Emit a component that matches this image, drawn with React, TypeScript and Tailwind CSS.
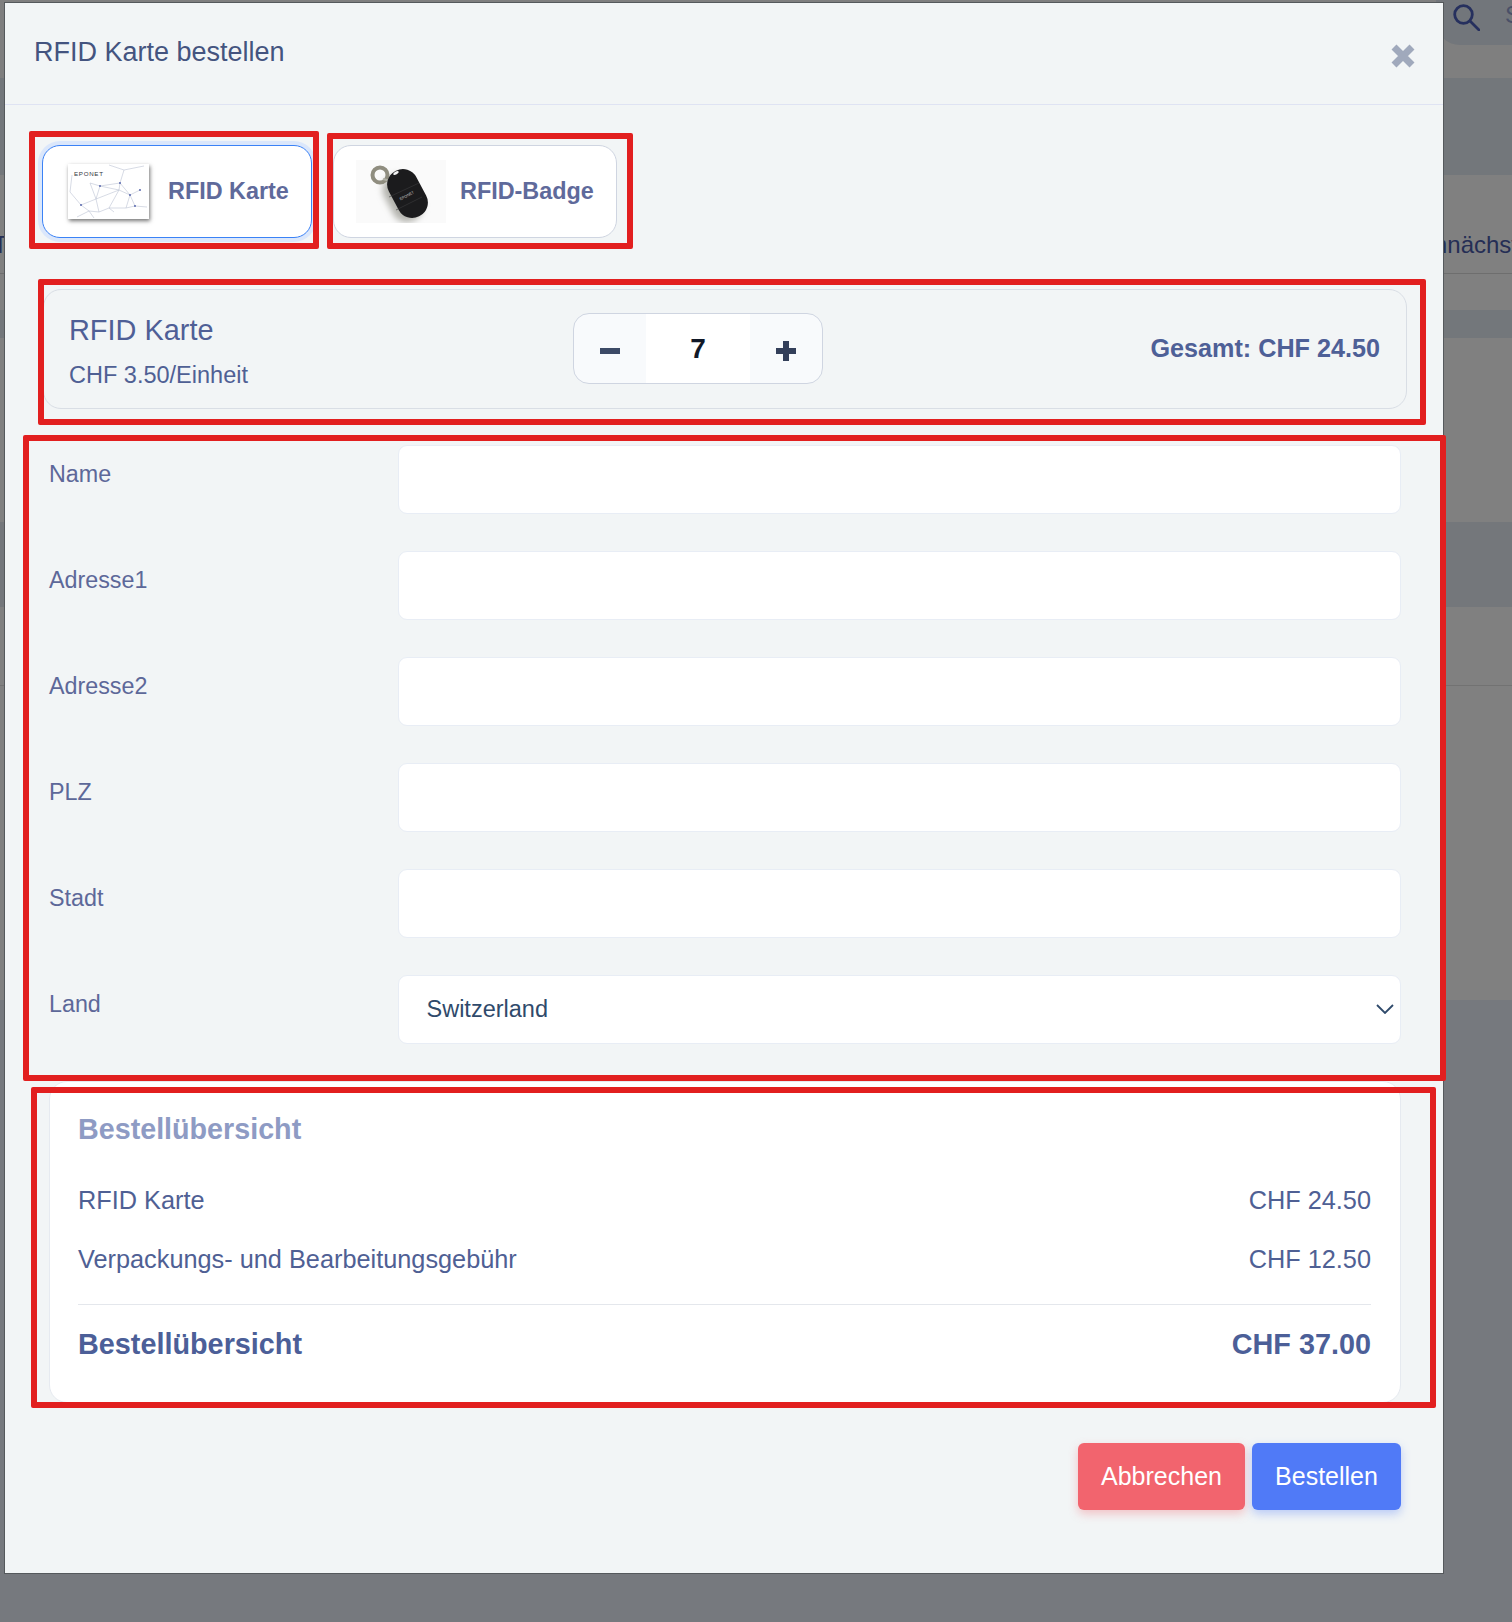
const fields = ["Name", "Adresse1", "Adresse2", "PLZ", "Stadt"];

// node positions of the network printed on the card
const nodes: Record<string, [number, number]> = {
  a: [56, 6], b: [76, 2], c: [41, 1], d: [52, 19], e: [72, 26], f: [62, 31], g: [51, 26], h: [32, 22],
  i: [22, 19], j: [28, 35], k: [13, 41], l: [2, 28], m: [4, 11], n: [41, 44], o: [46, 48], p: [58, 44],
  q: [67, 42], r: [79, 43], s: [31, 48], t: [21, 47], u: [9, 53], v: [26, 54],
};
const links = ["ab", "ac", "ad", "dg", "gf", "fe", "fq", "fp", "gn", "gj", "jh", "hi", "ij", "jk", "kl", "lm", "js", "sn", "np", "pq", "qr", "kt", "ts", "tu", "tv", "hg", "dh", "no", "fd"];

function CardPicture() {
  return (
    <div className="h-[55px] w-[81px] shrink-0 bg-white shadow-[1px_2px_4px_rgba(0,0,0,0.55)]">
      <svg viewBox="0 0 81 55" className="h-full w-full">
        {links.map((l) => (
          <line key={l} x1={nodes[l[0]][0]} y1={nodes[l[0]][1]} x2={nodes[l[1]][0]} y2={nodes[l[1]][1]} stroke="#bcc3d4" strokeWidth="0.6" />
        ))}
        {["d", "e", "f", "h", "k", "q"].map((k) => (
          <circle key={k} cx={nodes[k][0]} cy={nodes[k][1]} r="0.9" fill="#4a5aa8" />
        ))}
        <text x="6" y="12" fontSize="6.2" letterSpacing="0.7" fill="#33363d" fontFamily="Liberation Sans, sans-serif">EPONET</text>
      </svg>
    </div>
  );
}

function BadgePicture() {
  return (
    <div className="h-[63px] w-[90px] shrink-0 bg-[#fafafa]">
      <svg viewBox="0 0 90 63" className="h-full w-full">
        <defs>
          <filter id="fob-blur" x="-50%" y="-50%" width="200%" height="200%">
            <feGaussianBlur stdDeviation="3" />
          </filter>
        </defs>
        <rect x="31" y="13" width="31" height="50" rx="15" transform="rotate(-28 47 38)" fill="#b4b4ae" filter="url(#fob-blur)" />
        <circle cx="24" cy="15" r="7.5" fill="none" stroke="#8f8d7f" strokeWidth="4" />
        <path d="M27 19l11 3" stroke="#b0b0a6" strokeWidth="2" />
        <rect x="36" y="8" width="31" height="51" rx="15" transform="rotate(-28 51.5 33.5)" fill="#1b1b1d" />
        <path d="M33 37l30-14" stroke="#3a3a3c" strokeWidth="0.6" />
        <path d="M40 50l26-13" stroke="#3a3a3c" strokeWidth="0.6" />
        <text x="51" y="37" fontSize="3.8" textAnchor="middle" fill="#c9c9c9" transform="rotate(-28 51 36)" fontFamily="Liberation Sans, sans-serif">EPONET</text>
        <ellipse cx="40" cy="13" rx="3" ry="1.5" fill="#f4f4f4" transform="rotate(-28 40 13)" />
      </svg>
    </div>
  );
}

function SearchGlyph() {
  return (
    <svg viewBox="0 0 27 27" className="h-[27px] w-[27px] shrink-0" fill="none" stroke="#26305e" strokeWidth="2.8">
      <circle cx="10.5" cy="10.5" r="8.8" />
      <path d="M17 17l9 9" strokeLinecap="round" />
    </svg>
  );
}

function Backdrop() {
  return (
    <div className="flex h-[1622px] flex-col overflow-hidden bg-[#76797e] text-[24px] text-[#252e55]">
      <div className="flex h-[78px] shrink-0 justify-end bg-[#7f7f7f]">
        <div className="flex h-[45px] w-[76px] items-start gap-[25px] rounded-bl-[24px] bg-[#72767b] pl-[17px] pt-[4px]">
          <SearchGlyph />
          <span className="leading-[22px] text-[#4a5068]">S</span>
        </div>
      </div>
      <div className="h-[97px] shrink-0 bg-[#73777b]" />
      <div className="h-[135px] shrink-0 bg-[#808080]">
        <div className="flex h-[99px] justify-between border-b border-[#6e6e6e] pt-[56px] leading-[28px]">
          <span className="-ml-[7px]">T</span>
          <span className="-mr-[6px]">Demnächst</span>
        </div>
      </div>
      <div className="h-[28px] shrink-0 bg-[#73777b]" />
      <div className="h-[184px] shrink-0 bg-[#808080]" />
      <div className="h-[85px] shrink-0 bg-[#74777b]" />
      <div className="h-[393px] shrink-0 bg-[#808080]">
        <div className="h-[79px] border-b border-[#727272]" />
      </div>
    </div>
  );
}

function OrderModal() {
  return (
    <div className="absolute left-[4px] top-[2px] h-[1572px] w-[1440px] border border-[#55595c] bg-[#f2f5f6]">
      {/* Header */}
      <div className="flex h-[102px] justify-between border-b border-[#dfe3f3]">
        <h2 className="ml-[29px] mt-[31px] text-[27px] leading-[36px] text-[#44547f]">RFID Karte bestellen</h2>
        <svg viewBox="0 0 24 24" className="mr-[28px] mt-[41px] h-[24px] w-[24px]" stroke="#a0a9bc" strokeWidth="7">
          <path d="M3 3l18 18M21 3L3 21" />
        </svg>
      </div>

      {/* Product choice */}
      <div className="ml-[37px] mt-[40px] flex gap-[21px]">
        <div className="flex h-[93px] w-[270px] items-center gap-[19px] rounded-[18px] border border-[#3b82f6] bg-white pl-[25px] shadow-[0_0_0_4px_#dbe7fb]">
          <CardPicture />
          <span className="text-[23.4px] font-bold text-[#5f6a9b]">RFID Karte</span>
        </div>
        <div className="flex h-[93px] w-[284px] items-center gap-[14px] rounded-[18px] border border-[#cfd5e1] bg-white pl-[22px]">
          <BadgePicture />
          <span className="text-[23.4px] font-bold text-[#5f6a9b]">RFID-Badge</span>
        </div>
      </div>

      {/* Quantity */}
      <div className="ml-[38px] mt-[51px] flex h-[120px] w-[1364px] items-center rounded-[18px] border border-[#d9dee5] pl-[25px] pr-[26px]">
        <div className="w-[504px] pt-[3px]">
          <div className="text-[28.9px] leading-[34px] text-[#4f5f96]">RFID Karte</div>
          <div className="mt-[14px] text-[23.5px] leading-[28px] text-[#4f6094]">CHF 3.50/Einheit</div>
        </div>
        <div className="mt-[-1px] flex h-[71px] w-[250px] overflow-hidden rounded-[16px] border border-[#cfd5e1] bg-[#f8fafc]">
          <div className="flex w-[72px] items-center justify-center pt-[5px]">
            <div className="h-[6px] w-[20px] bg-[#3c4a66]" />
          </div>
          <div className="flex w-[104px] items-center justify-center bg-white text-[28px] font-bold leading-none text-[#111827]">7</div>
          <div className="flex flex-1 items-center justify-center pt-[5px]">
            <svg viewBox="0 0 20 20" className="h-[20px] w-[20px]" stroke="#333f5a" strokeWidth="6">
              <path d="M0 10h20M10 0v20" />
            </svg>
          </div>
        </div>
        <div className="flex-1 text-right text-[25.2px] font-bold text-[#4e6097]">Gesamt: CHF 24.50</div>
      </div>

      {/* Address */}
      <div className="ml-[44px] mr-[42px] mt-[36px] flex flex-col gap-[37px]">
        {fields.map((f) => (
          <div key={f} className="flex">
            <label className="w-[348.5px] pt-[15px] text-[23.3px] leading-[28px] text-[#5d6899]">{f}</label>
            <input className="h-[69px] flex-1 rounded-[9px] border border-[#e8edf5] bg-white" />
          </div>
        ))}
        <div className="flex">
          <label className="w-[348.5px] pt-[15px] text-[23.3px] leading-[28px] text-[#5d6899]">Land</label>
          <div className="relative flex-1">
            <select className="h-[69px] w-full appearance-none rounded-[9px] border border-[#e8edf5] bg-white pl-[28px] text-[23.5px] text-[#2f4a6b]">
              <option>Switzerland</option>
            </select>
            <svg viewBox="0 0 18 10" className="absolute right-[7px] top-[29px] h-[10px] w-[18px]" fill="none" stroke="#2f4a6b" strokeWidth="1.8">
              <path d="M1 1l8 8 8-8" />
            </svg>
          </div>
        </div>
      </div>

      {/* Summary */}
      <div className="ml-[44px] mr-[42px] mt-[37px] h-[322px] rounded-[18px] border border-[#e6eaf0] bg-white pl-[28px] pr-[29px] pt-[30px]">
        <div className="text-[28.7px] font-bold leading-[34px] text-[#8e9bc4]">Bestellübersicht</div>
        <div className="mt-[39px] flex justify-between text-[25.3px] leading-[30px] text-[#4f6094]">
          <span>RFID Karte</span>
          <span>CHF 24.50</span>
        </div>
        <div className="mt-[29px] flex justify-between text-[25.3px] leading-[30px] text-[#4f6094]">
          <span>Verpackungs- und Bearbeitungsgebühr</span>
          <span>CHF 12.50</span>
        </div>
        <div className="mt-[30px] flex justify-between border-t border-[#e4e7ec] pt-[22px] text-[28.8px] font-bold leading-[34px] text-[#4c5f98]">
          <span>Bestellübersicht</span>
          <span>CHF 37.00</span>
        </div>
      </div>

      {/* Actions */}
      <div className="mr-[42px] mt-[40px] flex justify-end gap-[7px] text-[25px] text-white">
        <button className="h-[67px] w-[167px] rounded-[6px] bg-[#f2646e] shadow-[0_4px_10px_rgba(242,100,110,0.35)]">Abbrechen</button>
        <button className="h-[67px] w-[149px] rounded-[6px] bg-[#507af7] shadow-[0_4px_10px_rgba(80,122,247,0.35)]">Bestellen</button>
      </div>
    </div>
  );
}

export default function App() {
  return (
    <div className="relative h-[1622px] w-[1512px] overflow-hidden font-['Liberation_Sans',Arial,sans-serif]">
      <Backdrop />
      <OrderModal />

      {/* Red annotation boxes drawn over the screenshot */}
      <div className="absolute left-[29px] top-[131px] h-[118px] w-[290px] rounded-[2px] border-[6px] border-[#e21f1f]" />
      <div className="absolute left-[327px] top-[133px] h-[116px] w-[306px] rounded-[2px] border-[6px] border-[#e21f1f]" />
      <div className="absolute left-[37.5px] top-[279px] h-[146px] w-[1388px] rounded-[2px] border-[6px] border-[#e21f1f]" />
      <div className="absolute left-[23px] top-[435px] h-[646px] w-[1423px] rounded-[2px] border-[6px] border-[#e21f1f]" />
      <div className="absolute left-[31px] top-[1087px] h-[321px] w-[1405px] rounded-[2px] border-[6px] border-[#e21f1f]" />
    </div>
  );
}
